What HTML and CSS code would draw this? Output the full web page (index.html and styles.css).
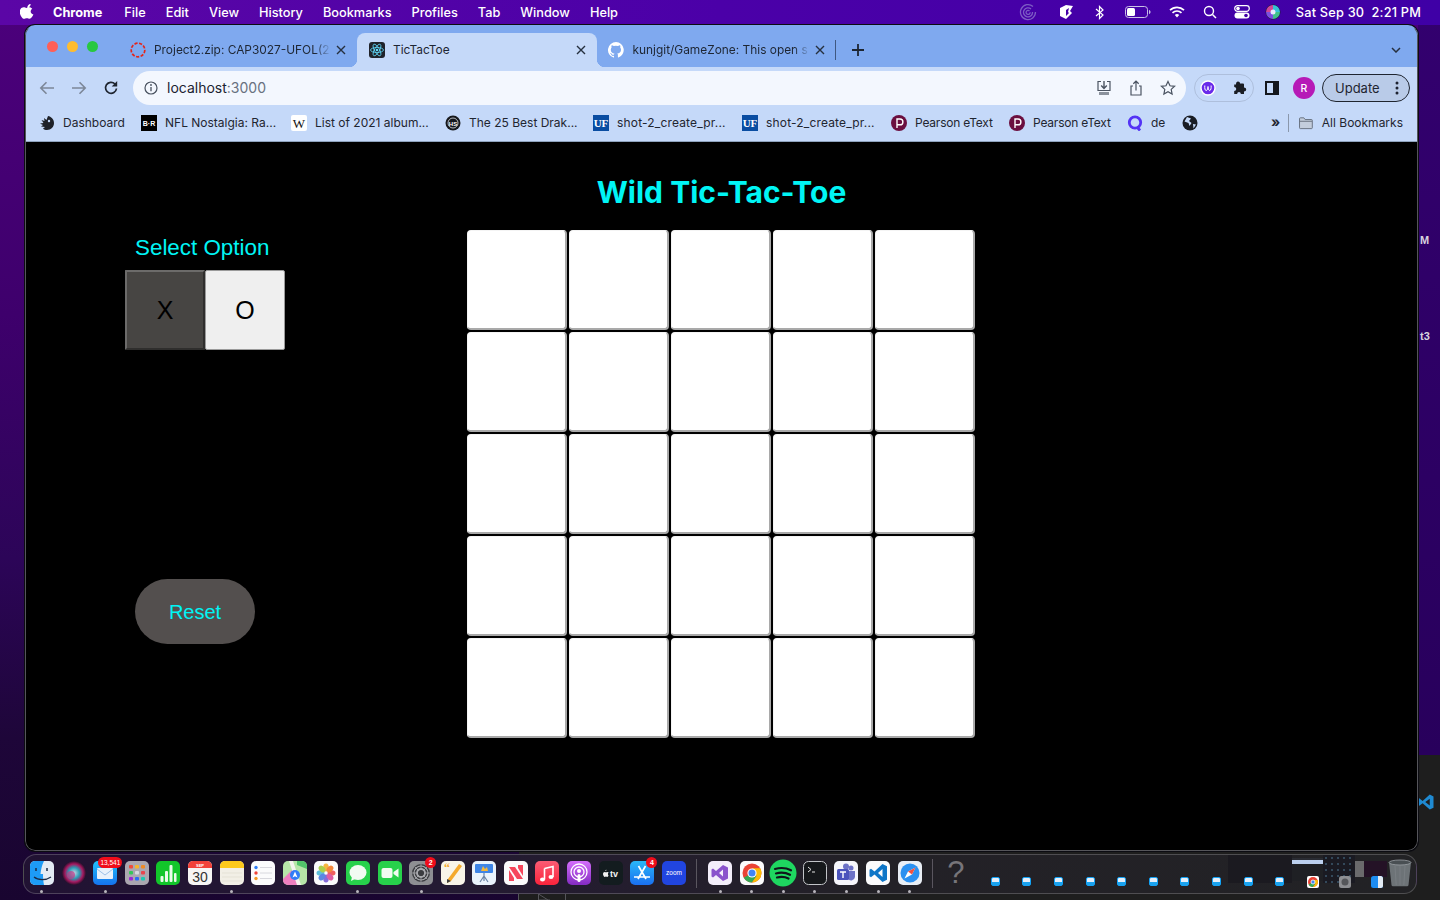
FILE: index.html
```html
<!DOCTYPE html>
<html lang="en">
<head>
<meta charset="utf-8">
<title>TicTacToe</title>
<link rel="stylesheet" href="styles.css">
</head>
<body>
<div class="vscode-behind"><span class="bg-text bg-m">M</span><span class="bg-text bg-t3">t3</span>
  <svg class="vs-peek" width="18" height="18" viewBox="0 0 24 24"><path fill="#1f8ad2" d="M17 2l5 2.500v15L17 22 7.500 13.500 3 17l-2-1.200V8.200L3 7l4.500 3.500zM17 7.500L11 12l6 4.500z"/></svg>
  <svg class="vs-scrap" width="50" height="6" viewBox="0 0 50 6"><path d="M.5 0v6M20.500 0v6L32 6M20.500 0L30 6M47.500 0v6" fill="none" stroke="#55555a"/></svg>
</div>
<header class="menubar">
  <svg class="apple" width="14" height="16" viewBox="0 0 14 16"><path fill="#fff" d="M10.600 1c.1 1-.3 1.900-.9 2.600-.6.700-1.500 1.200-2.400 1.100-.1-1 .4-1.900.9-2.500C8.800 1.500 9.800 1 10.600 1zM13.400 11.500c-.4.900-.6 1.300-1.100 2-.7 1-1.600 2.300-2.800 2.300-1 0-1.300-.7-2.700-.6-1.400 0-1.700.7-2.700.6-1.200 0-2-1.100-2.700-2.100C-.5 11-.7 7.900.400 6.200 1.200 5 2.400 4.300 3.600 4.300s1.900.7 2.900.7c.9 0 1.500-.7 2.900-.7 1 0 2.100.6 2.900 1.500-2.500 1.400-2.100 5 1.100 5.700z"/></svg>
  <nav class="menu-left">
    <span class="menu-strong">Chrome</span><span>File</span><span>Edit</span><span>View</span><span>History</span><span>Bookmarks</span><span>Profiles</span><span>Tab</span><span>Window</span><span>Help</span>
  </nav>
  <div class="menu-right">
    <svg class="st st-spiral" width="18" height="18" viewBox="0 0 18 18"><path fill="none" stroke="#7d5cc4" stroke-width="1.300" d="M14 3.500A7.500 7.500 0 1 0 16.500 9M12 6a4.500 4.500 0 1 0 1.500 3M10.500 8a2 2 0 1 0 .6 1.300"/></svg>
    <svg class="st st-box" width="16" height="16" viewBox="0 0 16 16"><path fill="#fff" d="M8 1l7 1-3 5 2 2-6 6-6-3V4z"/><path fill="#4400a8" d="M8 6l3-2-1 4 1 1-3 3z"/></svg>
    <svg class="st st-bt" width="10" height="15" viewBox="0 0 10 15"><path fill="none" stroke="#fff" stroke-width="1.200" d="M1 4l7 6-3.500 3.500v-12L8 5l-7 6"/></svg>
    <svg class="st st-bat" width="26" height="12" viewBox="0 0 26 12"><rect x=".5" y=".5" width="22" height="11" rx="3" fill="none" stroke="#c9bfe6"/><rect x="2" y="2" width="8" height="8" rx="1.500" fill="#fff"/><path d="M24 4v4c1-.3 1.500-1 1.500-2s-.5-1.700-1.500-2z" fill="#c9bfe6"/></svg>
    <svg class="st st-wifi" width="16" height="12" viewBox="0 0 16 12"><path fill="none" stroke="#fff" stroke-width="1.700" d="M1 4.200a10 10 0 0 1 14 0M3.500 6.800a6.500 6.500 0 0 1 9 0"/><path fill="#fff" d="M5.800 9a3.200 3.200 0 0 1 4.400 0L8 11.500z"/></svg>
    <svg class="st st-search" width="14" height="14" viewBox="0 0 14 14"><circle cx="6" cy="6" r="4.500" fill="none" stroke="#fff" stroke-width="1.400"/><path d="M9.500 9.500L13 13" stroke="#fff" stroke-width="1.500"/></svg>
    <svg class="st st-cc" width="16" height="14" viewBox="0 0 16 14"><rect x=".7" y=".7" width="14.600" height="5.600" rx="2.800" fill="none" stroke="#fff" stroke-width="1.200"/><circle cx="4" cy="3.500" r="1.800" fill="#fff"/><rect x=".5" y="7.500" width="15" height="6" rx="3" fill="#fff"/><circle cx="12" cy="10.500" r="1.800" fill="#4400a8"/></svg>
    <svg class="st st-siri" width="16" height="16" viewBox="0 0 16 16"><circle cx="8" cy="8" r="7.500" fill="#1b1b3a"/><path d="M8 1a7 7 0 0 1 7 7H8z" fill="#35c1d6"/><path d="M1 8a7 7 0 0 1 7-7v7z" fill="#d0449b"/><path d="M8 15a7 7 0 0 1-7-7h7z" fill="#7b4de0"/><path d="M15 8a7 7 0 0 1-7 7V8z" fill="#3fbf8a"/><circle cx="8" cy="8" r="2.500" fill="#e8e8ff"/></svg>
    <span class="clock">Sat Sep 30&nbsp; 2:21 PM</span>
  </div>
</header>

<main class="window">
  <div class="tabstrip">
    <div class="lights"><i class="light red"></i><i class="light yellow"></i><i class="light green"></i></div>
    <div class="tab tab-first">
      <svg class="fav" width="16" height="16" viewBox="0 0 16 16"><circle cx="8" cy="8" r="6.800" fill="none" stroke="#e3261b" stroke-width="1.700" stroke-dasharray="3.200 1.500"/></svg>
      <span class="tab-title">Project2.zip: CAP3027-UFOL(2</span>
      <svg class="tab-x" width="10" height="10" viewBox="0 0 10 10"><path d="M1 1l8 8M9 1l-8 8" stroke="#26303f" stroke-width="1.400"/></svg>
    </div>
    <div class="tab tab-active">
      <svg class="fav" width="16" height="16" viewBox="0 0 16 16"><rect width="16" height="16" rx="3" fill="#20232a"/><g fill="none" stroke="#61dafb" stroke-width=".8"><ellipse cx="8" cy="8" rx="6.500" ry="2.500"/><ellipse cx="8" cy="8" rx="6.500" ry="2.500" transform="rotate(60 8 8)"/><ellipse cx="8" cy="8" rx="6.500" ry="2.500" transform="rotate(120 8 8)"/></g><circle cx="8" cy="8" r="1.300" fill="#61dafb"/></svg>
      <span class="tab-title">TicTacToe</span>
      <svg class="tab-x" width="10" height="10" viewBox="0 0 10 10"><path d="M1 1l8 8M9 1l-8 8" stroke="#26303f" stroke-width="1.400"/></svg>
    </div>
    <div class="tab tab-last">
      <svg class="fav" width="16" height="16" viewBox="0 0 16 16"><path fill="#fff" d="M8 0a8 8 0 0 0-2.500 15.600c.4.100.5-.2.500-.4v-1.400c-2.200.5-2.700-1-2.700-1-.4-.9-.9-1.200-.9-1.200-.7-.5.100-.5.100-.5.800.1 1.200.8 1.200.8.700 1.200 1.900.9 2.300.7.100-.5.300-.9.500-1.100-1.800-.2-3.700-.9-3.700-4 0-.9.300-1.600.8-2.100-.1-.2-.4-1 .1-2.100 0 0 .7-.2 2.200.8a7.600 7.600 0 0 1 4 0c1.500-1 2.200-.8 2.200-.8.400 1.100.2 1.900.1 2.100.5.600.8 1.300.8 2.100 0 3.100-1.900 3.700-3.700 3.900.3.300.6.700.6 1.500v2.200c0 .2.100.5.600.4A8 8 0 0 0 8 0z"/></svg>
      <span class="tab-title">kunjgit/GameZone: This open s</span>
      <svg class="tab-x" width="10" height="10" viewBox="0 0 10 10"><path d="M1 1l8 8M9 1l-8 8" stroke="#26303f" stroke-width="1.400"/></svg>
    </div>
    <i class="tab-sep"></i>
    <svg class="newtab" width="12" height="12" viewBox="0 0 12 12"><path d="M6 0v12M0 6h12" stroke="#1d2532" stroke-width="1.800"/></svg>
    <svg class="tab-menu" width="10" height="6" viewBox="0 0 10 6"><path d="M1 1l4 4 4-4" fill="none" stroke="#26303f" stroke-width="1.500"/></svg>
  </div>

  <div class="toolbar">
    <svg class="nav-ico" width="16" height="14" viewBox="0 0 16 14"><path d="M15 7H2M7.500 1.200L1.800 7l5.700 5.800" fill="none" stroke="#7c8798" stroke-width="1.600"/></svg>
    <svg class="nav-ico" width="16" height="14" viewBox="0 0 16 14"><path d="M1 7h13M8.500 1.200L14.200 7l-5.700 5.800" fill="none" stroke="#7c8798" stroke-width="1.600"/></svg>
    <svg class="nav-ico" width="16" height="16" viewBox="0 0 16 16"><path d="M13.500 8.500A5.500 5.500 0 1 1 12 4" fill="none" stroke="#1f2530" stroke-width="1.700"/><path d="M14.200 1v5.500H8.700z" fill="#1f2530"/></svg>
    <div class="omnibox">
      <svg width="14" height="14" viewBox="0 0 14 14"><circle cx="7" cy="7" r="6" fill="none" stroke="#47505e" stroke-width="1.200"/><path d="M7 6v4.200" stroke="#47505e" stroke-width="1.300"/><circle cx="7" cy="4" r=".9" fill="#47505e"/></svg>
      <span class="url">localhost<span class="url-port">:3000</span></span>
      <div class="omni-actions">
        <svg width="16" height="16" viewBox="0 0 16 16"><path d="M5 1.500H2v9h12v-9h-3" fill="none" stroke="#4a5361" stroke-width="1.200"/><path d="M8 1v7M5.200 5.500L8 8.400l2.800-2.900" fill="none" stroke="#4a5361" stroke-width="1.400"/><rect x="3" y="12" width="10" height="3" fill="#8b929d"/></svg>
        <svg width="14" height="16" viewBox="0 0 14 16"><path d="M4 6H2v9h10V6h-2" fill="none" stroke="#4a5361" stroke-width="1.200"/><path d="M7 10.500V1.500M4.300 3.800L7 1.200l2.700 2.600" fill="none" stroke="#4a5361" stroke-width="1.200"/></svg>
        <svg width="16" height="16" viewBox="0 0 16 16"><path d="M8 1.500l2 4.300 4.600.5-3.400 3.100.9 4.600L8 11.700l-4.100 2.300.9-4.600L1.400 6.300 6 5.800z" fill="none" stroke="#4a5361" stroke-width="1.200"/></svg>
      </div>
    </div>
    <div class="ext-pill">
      <svg width="16" height="16" viewBox="0 0 16 16"><circle cx="8" cy="8" r="7" fill="#6a2bea" stroke="#fff" stroke-width="1.400"/><path d="M4.800 5.500c-.3 3 .2 5 1.400 5s1.800-2 1.800-4c0 2 .6 4 1.700 4s1.700-2.500 1.400-5" fill="none" stroke="#fff" stroke-width="1"/></svg>
      <svg width="16" height="16" viewBox="0 0 16 16"><path fill="#1a1d24" d="M6 1.500c1.300 0 2 .8 2 2H11a1 1 0 0 1 1 1v3c1.300 0 2.200.8 2.200 2s-.9 2-2.200 2v2.500H8.800c0-1.300-.8-2-1.800-2s-1.800.7-1.800 2H2.200v-3c1.200 0 2-.8 2-2s-.8-2-2-2V4.500H4c0-1.800.7-3 2-3z"/></svg>
    </div>
    <svg class="side-ico" width="14" height="14" viewBox="0 0 14 14"><rect x="1" y="1" width="12" height="12" fill="none" stroke="#14171d" stroke-width="2"/><rect x="8" y="1" width="5" height="12" fill="#14171d"/></svg>
    <div class="avatar">R</div>
    <div class="update"><span>Update</span>
      <svg width="4" height="14" viewBox="0 0 4 14"><circle cx="2" cy="2" r="1.500" fill="#1d2230"/><circle cx="2" cy="7" r="1.500" fill="#1d2230"/><circle cx="2" cy="12" r="1.500" fill="#1d2230"/></svg>
    </div>
  </div>

  <div class="bookmarks">
    <a class="bm"><svg width="16" height="16" viewBox="0 0 16 16"><path fill="#1e2128" d="M9 1c3 .5 6 3 6 7 0 4-3 7-7 7-1.500 0-3-.5-4-1.500L6 12l-4-.5L4 10 1 8.500 4.500 8 2.500 5l3 1L5 3l2.500 2z"/><circle cx="10" cy="6" r="1.200" fill="#c5d9f9"/></svg><span>Dashboard</span></a>
    <a class="bm bm-nfl"><svg width="16" height="16" viewBox="0 0 16 16"><rect width="16" height="16" fill="#000"/><text x="8" y="11" class="svg-nfl">B·R</text></svg><span>NFL Nostalgia: Ra...</span></a>
    <a class="bm bm-w"><svg width="16" height="16" viewBox="0 0 16 16"><rect width="16" height="16" rx="2" fill="#fff"/><text x="8" y="13" class="svg-w">W</text></svg><span>List of 2021 album...</span></a>
    <a class="bm bm-hs"><svg width="16" height="16" viewBox="0 0 16 16"><circle cx="8" cy="8" r="7.500" fill="#16181c"/><circle cx="8" cy="8" r="5" fill="none" stroke="#dfe3ea" stroke-width=".8"/><text x="8" y="10.500" class="svg-hs">HS</text></svg><span>The 25 Best Drak...</span></a>
    <a class="bm bm-uf"><svg width="16" height="16" viewBox="0 0 16 16"><rect width="16" height="16" fill="#0a4da2"/><text x="8" y="12" class="svg-uf">UF</text></svg><span class="wide">shot-2_create_pr...</span></a>
    <a class="bm bm-uf2"><svg width="16" height="16" viewBox="0 0 16 16"><rect width="16" height="16" fill="#0a4da2"/><text x="8" y="12" class="svg-uf">UF</text></svg><span class="wide">shot-2_create_pr...</span></a>
    <a class="bm bm-p"><svg width="16" height="16" viewBox="0 0 16 16"><circle cx="8" cy="8" r="8" fill="#6b0f3f"/><path d="M6 13V4h3a2.800 2.800 0 0 1 0 5.800H6" fill="none" stroke="#fff" stroke-width="1.400"/></svg><span class="narrow">Pearson eText</span></a>
    <a class="bm bm-p2"><svg width="16" height="16" viewBox="0 0 16 16"><circle cx="8" cy="8" r="8" fill="#6b0f3f"/><path d="M6 13V4h3a2.800 2.800 0 0 1 0 5.800H6" fill="none" stroke="#fff" stroke-width="1.400"/></svg><span class="narrow">Pearson eText</span></a>
    <a class="bm bm-q"><svg width="16" height="16" viewBox="0 0 16 16"><circle cx="8" cy="7.500" r="5.700" fill="none" stroke="#5433f5" stroke-width="2.800"/><path d="M10 12l3 3.500" stroke="#5433f5" stroke-width="2.800"/></svg><span>de</span></a>
    <a class="bm bm-globe"><svg width="16" height="16" viewBox="0 0 16 16"><circle cx="8" cy="8" r="7.500" fill="#1a1d24"/><path d="M5 2l4 1.500L7 6l2.500 2-2 3-1-3L2.500 6.500zM11 9l3 .5-2.500 4z" fill="#c5d9f9"/></svg></a>
    <span class="bm-more">»</span>
    <i class="bm-sep"></i>
    <a class="bm bm-all"><svg width="16" height="14" viewBox="0 0 16 14"><path d="M.6 12.500V2a1 1 0 0 1 1-1h4l1.500 2h7.300a1 1 0 0 1 1 1v8.500a1 1 0 0 1-1 1H1.600a1 1 0 0 1-1-1z" fill="#c3cddc" stroke="#5d6674"/><path d="M1 5h14" stroke="#5d6674"/></svg><span>All Bookmarks</span></a>
  </div>

  <section class="page">
    <h1 class="title">Wild Tic-Tac-Toe</h1>
    <div class="game">
      <aside class="panel">
        <h2 class="select-label">Select Option</h2>
        <div class="choice">
          <button class="opt opt-x">X</button>
          <button class="opt opt-o">O</button>
        </div>
        <button class="reset">Reset</button>
      </aside>
      <div class="board">
        <button class="cell"></button><button class="cell"></button><button class="cell"></button><button class="cell"></button><button class="cell"></button>
        <button class="cell"></button><button class="cell"></button><button class="cell"></button><button class="cell"></button><button class="cell"></button>
        <button class="cell"></button><button class="cell"></button><button class="cell"></button><button class="cell"></button><button class="cell"></button>
        <button class="cell"></button><button class="cell"></button><button class="cell"></button><button class="cell"></button><button class="cell"></button>
        <button class="cell"></button><button class="cell"></button><button class="cell"></button><button class="cell"></button><button class="cell"></button>
      </div>
    </div>
  </section>
</main>

<footer class="dock">
  <div class="di run"><svg width="24" height="24" viewBox="0 0 24 24"><rect width="24" height="24" rx="5" fill="#e3ebf4"/><path d="M0 5a5 5 0 0 1 5-5h9c-2 4-3 8-3.500 13H13c0 4 .3 7 1 11H5a5 5 0 0 1-5-5z" fill="#1d9bf6"/><path d="M6 7v3M17 7v3" stroke="#1a2a44" stroke-width="1.500"/><path d="M4 16c4 3.500 12 3.500 17 0" fill="none" stroke="#1a2a44" stroke-width="1.200"/></svg></div>
  <div class="di"><svg width="24" height="24" viewBox="0 0 24 24"><defs><radialGradient id="gSiri"><stop offset="0" stop-color="#c9d6e8"/><stop offset=".45" stop-color="#2b9db5"/><stop offset=".75" stop-color="#a6185f"/><stop offset="1" stop-color="#2a0f2d"/></radialGradient></defs><circle cx="12" cy="12" r="12" fill="url(#gSiri)"/><circle cx="9" cy="14" r="4" fill="#c23a86" opacity=".7"/></svg></div>
  <div class="di run"><svg width="24" height="24" viewBox="0 0 24 24"><defs><linearGradient id="gMail" x1="0" y1="0" x2="0" y2="1"><stop offset="0" stop-color="#1fc1fb"/><stop offset="1" stop-color="#1573ee"/></linearGradient></defs><rect width="24" height="24" rx="5" fill="url(#gMail)"/><rect x="4" y="7" width="16" height="11" rx="1" fill="#e8f1fb"/><path d="M4 8l8 6 8-6" fill="none" stroke="#9cc0e8"/></svg><b class="badge badge-wide">13,541</b></div>
  <div class="di"><svg width="24" height="24" viewBox="0 0 24 24"><rect width="24" height="24" rx="5" fill="#aba7b0"/><g><rect x="4" y="4" width="4" height="3.500" rx="1" fill="#ef4b3d"/><rect x="10" y="4" width="4" height="3.500" rx="1" fill="#f6b52c"/><rect x="16" y="4" width="4" height="3.500" rx="1" fill="#f08a25"/><rect x="4" y="10" width="4" height="3.500" rx="1" fill="#34c759"/><rect x="10" y="10" width="4" height="3.500" rx="1" fill="#d5d8de"/><rect x="16" y="10" width="4" height="3.500" rx="1" fill="#e9444d"/><rect x="4" y="16" width="4" height="3.500" rx="1" fill="#9b28d6"/><rect x="10" y="16" width="4" height="3.500" rx="1" fill="#2f6cf0"/><rect x="16" y="16" width="4" height="3.500" rx="1" fill="#1dc8b2"/></g></svg></div>
  <div class="di"><svg width="24" height="24" viewBox="0 0 24 24"><rect width="24" height="24" rx="5" fill="#12c62a"/><g fill="#e9fbe9"><rect x="4.500" y="15" width="3" height="6" rx="1"/><rect x="9" y="10" width="3" height="11" rx="1"/><rect x="13.500" y="4" width="3" height="17" rx="1"/><rect x="18" y="12" width="2.500" height="9" rx="1"/></g></svg></div>
  <div class="di"><svg width="24" height="24" viewBox="0 0 24 24"><rect width="24" height="24" rx="5" fill="#f7f6f5"/><path d="M0 7V5a5 5 0 0 1 5-5h14a5 5 0 0 1 5 5v2z" fill="#f2423a"/><text x="12" y="5.500" class="svg-sep">SEP</text><text x="12" y="21" class="svg-cal">30</text></svg></div>
  <div class="di run"><svg width="24" height="24" viewBox="0 0 24 24"><rect width="24" height="24" rx="5" fill="#f2efe6"/><path d="M0 7V5a5 5 0 0 1 5-5h14a5 5 0 0 1 5 5v2z" fill="#fdc91c"/><path d="M2 12h20M2 16h20M2 20h20" stroke="#dcd8cd" stroke-width=".6"/></svg></div>
  <div class="di"><svg width="24" height="24" viewBox="0 0 24 24"><rect width="24" height="24" rx="5" fill="#fbfbfc"/><circle cx="5" cy="6.500" r="1.700" fill="#2f7cf6"/><circle cx="5" cy="12" r="1.700" fill="#f04438"/><circle cx="5" cy="17.500" r="1.700" fill="#f59a23"/><path d="M9 6.500h12M9 12h12M9 17.500h12" stroke="#d8d8de"/></svg></div>
  <div class="di"><svg width="24" height="24" viewBox="0 0 24 24"><rect width="24" height="24" rx="5" fill="#b7e6a8"/><path d="M0 18L9 9l6 15H5a5 5 0 0 1-5-5z" fill="#ee7fbf"/><path d="M14 0h5a5 5 0 0 1 5 5v3L14 4z" fill="#52c46a"/><path d="M10 0l8 24h-4L6 0z" fill="#f5f3ee"/><circle cx="12" cy="14" r="5" fill="#2f7cf6"/><path d="M12 10.500l2.500 6-2.500-1.200-2.500 1.200z" fill="#fff"/></svg></div>
  <div class="di"><svg width="24" height="24" viewBox="0 0 24 24"><rect width="24" height="24" rx="5" fill="#fbfbfc"/><g opacity=".9"><ellipse cx="12" cy="6.500" rx="2.800" ry="4" fill="#f6b02c"/><ellipse cx="12" cy="17.500" rx="2.800" ry="4" fill="#7a5cd6"/><ellipse cx="6.500" cy="12" rx="4" ry="2.800" fill="#4fb9d8"/><ellipse cx="17.500" cy="12" rx="4" ry="2.800" fill="#ef4f4f"/><ellipse cx="8" cy="8" rx="3.800" ry="2.800" transform="rotate(45 8 8)" fill="#a2cc3a"/><ellipse cx="16" cy="8" rx="3.800" ry="2.800" transform="rotate(-45 16 8)" fill="#f37b2a"/><ellipse cx="8" cy="16" rx="3.800" ry="2.800" transform="rotate(-45 8 16)" fill="#4a7be0"/><ellipse cx="16" cy="16" rx="3.800" ry="2.800" transform="rotate(45 16 16)" fill="#db4d9a"/></g></svg></div>
  <div class="di run"><svg width="24" height="24" viewBox="0 0 24 24"><rect width="24" height="24" rx="5" fill="#27d14b"/><ellipse cx="12" cy="11.500" rx="8.500" ry="7.500" fill="#f2fbf2"/><path d="M6 16l-1 4 4-2z" fill="#f2fbf2"/></svg></div>
  <div class="di"><svg width="24" height="24" viewBox="0 0 24 24"><rect width="24" height="24" rx="5" fill="#27d14b"/><rect x="3.500" y="7" width="11" height="10" rx="2" fill="#f2fbf2"/><path d="M15.500 11l5-3.500v9l-5-3.500z" fill="#f2fbf2"/></svg></div>
  <div class="di run"><svg width="24" height="24" viewBox="0 0 24 24"><rect width="24" height="24" rx="5" fill="#8e8f93"/><circle cx="12" cy="12" r="9" fill="#3b3c40"/><circle cx="12" cy="12" r="7" fill="none" stroke="#a9aaae" stroke-width="1.200"/><circle cx="12" cy="12" r="4" fill="none" stroke="#a9aaae" stroke-width="1.800"/><path d="M12 3v6M12 15v6M3 12h6M15 12h6M6 6l4 4M14 14l4 4M18 6l-4 4M10 14l-4 4" stroke="#a9aaae" stroke-width=".8"/></svg><b class="badge">2</b></div>
  <div class="di"><svg width="24" height="24" viewBox="0 0 24 24"><rect width="24" height="24" rx="5" fill="#f8f4e8"/><text x="6" y="11" class="svg-quote">“</text><path d="M18 3l3 2-11 15-4 2 1-4z" fill="#f4a92c"/><path d="M6 18l4 2-4 2z" fill="#3c3c3c"/></svg></div>
  <div class="di"><svg width="24" height="24" viewBox="0 0 24 24"><rect width="24" height="24" rx="5" fill="#eaf3fc"/><rect x="3" y="3" width="18" height="9" rx="1" fill="#3f85e6"/><path d="M9 10l2-5 2 3 2-2 1 4z" fill="#f4b73a"/><path d="M12 12v8M8 21l4-6 4 6" stroke="#6b84a5" stroke-width="1.200" fill="none"/></svg></div>
  <div class="di"><svg width="24" height="24" viewBox="0 0 24 24"><rect width="24" height="24" rx="5" fill="#fbfbfc"/><path d="M5 6l6 0 8 12-6 0z" fill="#f6465c"/><path d="M5 9l5 8v3H5zM19 15l-5-8V4h5z" fill="#f6465c"/></svg></div>
  <div class="di"><svg width="24" height="24" viewBox="0 0 24 24"><defs><linearGradient id="gMusic" x1="0" y1="0" x2="0" y2="1"><stop offset="0" stop-color="#fb5c74"/><stop offset="1" stop-color="#fa233b"/></linearGradient></defs><rect width="24" height="24" rx="5" fill="url(#gMusic)"/><path d="M9.500 7.500L18 5.500V16M9.500 7.500V18.500" fill="none" stroke="#fff" stroke-width="1.600"/><ellipse cx="7.500" cy="18.500" rx="2.500" ry="2" fill="#fff"/><ellipse cx="16" cy="16" rx="2.500" ry="2" fill="#fff"/></svg></div>
  <div class="di"><svg width="24" height="24" viewBox="0 0 24 24"><defs><linearGradient id="gPod" x1="0" y1="0" x2="0" y2="1"><stop offset="0" stop-color="#d56efc"/><stop offset="1" stop-color="#832bc1"/></linearGradient></defs><rect width="24" height="24" rx="5" fill="url(#gPod)"/><circle cx="12" cy="11" r="8" fill="none" stroke="#fff" stroke-width="1.300"/><circle cx="12" cy="11" r="5" fill="none" stroke="#fff" stroke-width="1.300"/><circle cx="12" cy="10" r="2" fill="#fff"/><rect x="10.500" y="13" width="3" height="8" rx="1.500" fill="#fff"/></svg></div>
  <div class="di"><svg width="24" height="24" viewBox="0 0 24 24"><rect width="24" height="24" rx="5" fill="#131c1f"/><text x="11" y="15.500" class="svg-tv">tv</text><path fill="#f2f2f2" d="M7.400 8.800c.1.600-.4 1.300-1 1.300-.1-.6.400-1.300 1-1.300zM9.500 14.500c-.3.700-.7 1.400-1.300 1.400-.5 0-.6-.3-1.200-.3s-.8.300-1.200.3c-.7 0-1.800-1.500-1.800-3 0-1.300.8-2 1.700-2 .5 0 1 .3 1.300.3s.8-.3 1.400-.3c.5 0 1 .3 1.300.7-1.100.7-.9 2.300-.2 2.900z"/></svg></div>
  <div class="di"><svg width="24" height="24" viewBox="0 0 24 24"><defs><linearGradient id="gApp" x1="0" y1="0" x2="0" y2="1"><stop offset="0" stop-color="#2ab7f7"/><stop offset="1" stop-color="#1a6ff0"/></linearGradient></defs><rect width="24" height="24" rx="5" fill="url(#gApp)"/><path d="M8.500 5l7.500 13M15.500 5L8 18M4 16h16" stroke="#fff" stroke-width="1.700" fill="none"/></svg><b class="badge">4</b></div>
  <div class="di"><svg width="24" height="24" viewBox="0 0 24 24"><rect width="24" height="24" rx="5" fill="#2145e0"/><text x="12" y="14" class="svg-zoom">zoom</text></svg></div>
  <i class="dock-sep"></i>
  <div class="di run"><svg width="24" height="24" viewBox="0 0 24 24"><rect width="24" height="24" rx="5" fill="#f3eefa"/><path d="M15 4l5 2.500v11L15 20l-7-6-3 2.500-1.500-1V8.500L5 7.500 8 10zM15 8.500L11 12l4 3.500z" fill="#8a53cc"/></svg></div>
  <div class="di run"><svg width="24" height="24" viewBox="0 0 24 24"><rect width="24" height="24" rx="5" fill="#fbfbfc"/><circle cx="12" cy="12" r="9.500" fill="#ea4335"/><path d="M12 12L3.800 16.800A9.500 9.500 0 0 0 12 21.500l4.500-6.500z" fill="#34a853"/><path d="M12 12l4.500 3-4.500 6.500A9.500 9.500 0 0 0 21.500 12 9.500 9.500 0 0 0 20.200 7.200H12z" fill="#fbbc05"/><circle cx="12" cy="12" r="4.600" fill="#fff"/><circle cx="12" cy="12" r="3.500" fill="#4285f4"/></svg></div>
  <div class="di run"><svg class="big" width="28" height="28" viewBox="0 0 28 28"><circle cx="14" cy="14" r="13.500" fill="#1ed760"/><path d="M6 10c6-1.700 11-1.300 16 1.300M7 14.500c5-1.400 9.500-1 14 1.300M8 18.500c4-1 8-.8 11.500 1" fill="none" stroke="#10151a" stroke-width="2.200" stroke-linecap="round"/></svg></div>
  <div class="di run"><svg width="24" height="24" viewBox="0 0 24 24"><rect x=".5" y=".5" width="23" height="23" rx="5" fill="#16181b" stroke="#c2c4c8"/><path d="M5 6l3 2.500L5 11M9 11h3" fill="none" stroke="#e4e4e4"/></svg></div>
  <div class="di run"><svg width="24" height="24" viewBox="0 0 24 24"><rect width="24" height="24" rx="5" fill="#f6f6fb"/><circle cx="17" cy="7" r="2.500" fill="#6d72c6"/><circle cx="12" cy="5.500" r="3" fill="#6d72c6"/><path d="M14 10h7v6a4 4 0 0 1-7 2z" fill="#6d72c6"/><rect x="3" y="8" width="12" height="11" rx="1.500" fill="#4b53bc"/><path d="M6 11h6M9 11v6" stroke="#fff" stroke-width="1.400"/></svg></div>
  <div class="di run"><svg width="24" height="24" viewBox="0 0 24 24"><rect width="24" height="24" rx="5" fill="#fbfbfc"/><path d="M16.500 3l4.500 2.300v13.400L16.500 21l-8-7.500-3.500 2.700-1.500-1V8.800L5 7.800l3.500 2.700zM16.500 8L12 12l4.500 4z" fill="#0e76c8"/></svg></div>
  <div class="di run"><svg width="24" height="24" viewBox="0 0 24 24"><rect width="24" height="24" rx="5" fill="#e9eef5"/><circle cx="12" cy="12" r="9.500" fill="#2b90f0"/><path d="M17.500 6.500L10 10.500 6.500 17.500 14 13.500z" fill="#fff"/><path d="M17.500 6.500L10 10.500l4 3z" fill="#f4513f"/></svg></div>
  <i class="dock-sep dock-sep-2"></i>
  <div class="di"><span class="doc-q">?</span></div>
  <div class="di di-first-mini"><i class="mini"></i></div>
  <div class="di"><i class="mini"></i></div>
  <div class="di"><i class="mini"></i></div>
  <div class="di"><i class="mini"></i></div>
  <div class="di"><i class="mini"></i></div>
  <div class="di"><i class="mini"></i></div>
  <div class="di"><i class="mini"></i></div>
  <div class="di"><i class="mini"></i></div>
  <div class="di"><div class="thumb"></div><i class="mini"></i></div>
  <div class="di"><div class="thumb"></div><i class="mini"></i></div>
  <div class="di"><div class="thumb thumb-light"></div><svg class="mini-svg" width="12" height="12" viewBox="0 0 24 24"><rect width="24" height="24" rx="4" fill="#fff"/><circle cx="12" cy="12" r="10" fill="#ea4335"/><path d="M12 12L3 17a10 10 0 0 0 9 5l5-7z" fill="#34a853"/><path d="M12 12l5 3-5 7a10 10 0 0 0 9-14H12z" fill="#fbbc05"/><circle cx="12" cy="12" r="4" fill="#4285f4" stroke="#fff" stroke-width="1.500"/></svg></div>
  <div class="di"><div class="thumb thumb-grid"></div><svg class="mini-svg" width="12" height="12" viewBox="0 0 24 24"><rect width="24" height="24" rx="5" fill="#8e8f93"/><circle cx="12" cy="12" r="7" fill="#55565a"/></svg></div>
  <div class="di"><div class="thumb thumb-photo"></div><svg class="mini-svg" width="12" height="12" viewBox="0 0 24 24"><rect width="24" height="24" rx="5" fill="#1d8cf2"/><path d="M14 0h5a5 5 0 0 1 5 5v14a5 5 0 0 1-5 5h-5z" fill="#e3ebf4"/></svg></div>
  <svg class="trash" width="24" height="28" viewBox="0 0 24 28"><path d="M1 3h22l-2.500 23a1.500 1.500 0 0 1-1.500 1.300H5A1.500 1.500 0 0 1 3.500 26z" fill="#6d7377"/><ellipse cx="12" cy="3.500" rx="11" ry="2.500" fill="#494f53" stroke="#9aa0a4" stroke-width=".8"/><path d="M7 7l1.200 19M12 7v19M17 7l-1.200 19" stroke="#7f8589" stroke-width=".6"/></svg>
</footer>
</body>
</html>
```
FILE: styles.css
```css
* { box-sizing: border-box; }
html, body { margin: 0; padding: 0; }
body {
  position: relative;
  width: 1440px;
  height: 900px;
  overflow: hidden;
  font-family: Inter, "Liberation Sans", sans-serif;
  background: linear-gradient(180deg, #4c007c 0%, #3e006c 35%, #2c0558 62%, #1e0639 82%, #190530 100%);
}
.vscode-behind {
  position: absolute;
  inset: 0;
  background:
    linear-gradient(#1e1e1e, #1e1e1e) 519px 755px / 921px 145px no-repeat,
    linear-gradient(180deg, #33006f, #28005c) 1418px 0 / 22px 755px no-repeat;
}
.bg-text { position: absolute; left: 1420px; color: #d8d4df; font: 700 11px "Liberation Sans", sans-serif; }
.bg-m { top: 234px; }
.bg-t3 { top: 330px; }
.vs-peek { position: absolute; left: 1417px; top: 793px; }
.vs-scrap { position: absolute; left: 518px; top: 894px; }

.menubar {
  position: relative;
  display: flex;
  align-items: center;
  height: 25px;
  padding: 0 19px 1px 20px;
  color: #fff;
  font-size: 12.750px;
  font-weight: 500;
  background: linear-gradient(90deg, #5b06a6 0%, #4b00a8 50%, #3f00a6 100%);
}
.apple { flex: none; margin-top: -2px; }
.menu-left { display: flex; gap: 20px; margin-left: 19px; }
.menu-strong { font-weight: 700; margin-right: 2px; }
.menu-right { display: flex; align-items: center; margin-left: auto; }
.st { flex: none; }
.st-spiral { margin-right: 21px; }
.st-box { margin-right: 21px; }
.st-bt { margin-right: 20px; }
.st-bat { margin-right: 18px; }
.st-wifi { margin-right: 18px; }
.st-search { margin-right: 17px; }
.st-cc { margin-right: 15px; }
.st-siri { margin-right: 15px; }
.clock { white-space: nowrap; letter-spacing: .2px; }

.window {
  position: absolute;
  left: 25px;
  top: 25px;
  width: 1393px;
  height: 826px;
  display: flex;
  flex-direction: column;
  overflow: hidden;
  border-radius: 10px;
  background: #000;
  box-shadow: 0 0 0 1px #0c0c12;
}
.window::after {
  content: "";
  position: absolute;
  inset: 0;
  border: 1px solid #55555a;
  border-top-color: transparent;
  border-radius: 10px;
  pointer-events: none;
}
.tabstrip {
  display: flex;
  align-items: flex-end;
  flex: none;
  height: 42px;
  background: #7fa9ef;
}
.lights { display: flex; gap: 9px; flex: none; width: 93px; padding: 0 0 15px 22px; align-self: flex-end; }
.light { width: 11px; height: 11px; border-radius: 50%; }
.red { background: #ff5f57; }
.yellow { background: #febc2e; }
.green { background: #28c840; }
.tab {
  position: relative;
  display: flex;
  align-items: center;
  width: 239.500px;
  height: 34px;
  padding: 0 11px 0 12px;
  color: #1e2633;
  font-size: 11.900px;
  border-radius: 8px 8px 0 0;
}
.tab-first { width: 239px; }
.tab-last { padding-left: 11px; }
.tab-active { background: #c5d9f9; }
.tab-active::before, .tab-active::after {
  content: "";
  position: absolute;
  bottom: 0;
  width: 8px;
  height: 8px;
}
.tab-active::before { left: -8px; background: radial-gradient(circle at 0 0, transparent 8px, #c5d9f9 8.500px); }
.tab-active::after { right: -8px; background: radial-gradient(circle at 100% 0, transparent 8px, #c5d9f9 8.500px); }
.fav { flex: none; }
.tab-title {
  flex: 1;
  min-width: 0;
  margin: 0 5px 2px 8px;
  white-space: nowrap;
  overflow: visible;
  -webkit-mask-image: linear-gradient(90deg, #000 calc(100% - 16px), transparent);
  mask-image: linear-gradient(90deg, #000 calc(100% - 16px), transparent);
}
.tab-active .tab-title { -webkit-mask-image: none; mask-image: none; }
.tab-last .tab-title { margin-left: 9px; }
.tab-x { flex: none; }
.tab-sep { flex: none; width: 1px; height: 20px; margin: 0 0 7px -1px; background: #3f5780; }
.newtab { flex: none; margin: 0 0 11px 16px; }
.tab-menu { flex: none; margin: 0 17px 14px auto; }

.toolbar {
  display: flex;
  align-items: center;
  flex: none;
  height: 38px;
  padding: 4px 8px 0 14px;
  background: #c5d9f9;
}
.nav-ico { flex: none; width: 16px; margin-right: 16px; }
.omnibox {
  display: flex;
  align-items: center;
  flex: none;
  width: 1053px;
  height: 34px;
  margin-left: -2px;
  padding: 0 10px 0 11px;
  border-radius: 17px;
  background: #f3f7fe;
}
.url { margin: 0 0 2px 9px; color: #1c2330; font-size: 14px; }
.url-port { color: #687180; }
.omni-actions { display: flex; align-items: center; gap: 17px; margin-left: auto; }
.ext-pill {
  display: flex;
  align-items: center;
  gap: 16px;
  flex: none;
  width: 60px;
  height: 28px;
  margin-left: 8px;
  padding-left: 5px;
  border: 1px solid #aebfdc;
  border-radius: 14px;
}
.side-ico { flex: none; margin-left: 11px; }
.avatar {
  display: flex;
  align-items: center;
  justify-content: center;
  flex: none;
  width: 22px;
  height: 22px;
  margin-left: 14px;
  border-radius: 50%;
  color: #fff;
  font-size: 10.500px;
  font-weight: 500;
  background: #b61ab7;
}
.update {
  display: flex;
  align-items: center;
  justify-content: space-between;
  flex: none;
  width: 88px;
  height: 28px;
  margin-left: 7px;
  padding: 0 10px 0 12px;
  border: 1px solid #1f2530;
  border-radius: 14px;
  color: #1f2530;
  font-size: 13px;
  background: #b9cbe8;
}

.bookmarks {
  display: flex;
  align-items: center;
  flex: none;
  height: 37px;
  padding: 0 0 0 14px;
  color: #1f2530;
  font-size: 12px;
  background: #c5d9f9;
  border-bottom: 1px solid #8fa3bd;
}
.bm { display: flex; align-items: center; gap: 8px; flex: none; width: 102px; white-space: nowrap; }
.bm span { margin-bottom: 2px; }
.bm .wide { letter-spacing: .17px; }
.bm .narrow { letter-spacing: -.2px; }
.bm-nfl { width: 150px; }
.bm-w { width: 154px; }
.bm-hs { width: 148px; }
.bm-uf { width: 149px; }
.bm-uf2 { width: 149px; }
.bm-p { width: 118px; }
.bm-p2 { width: 118px; }
.bm-q { width: 55px; }
.bm-globe { width: 89px; }
.bm-more { flex: none; width: 16px; font-size: 14px; font-weight: 700; line-height: 14px; margin-top: -2px; }
.bm-sep { flex: none; width: 1px; height: 18px; margin: 0 10px 0 1px; background: #8a97ab; }
.bm-all { width: 104px; gap: 9px; }
.svg-nfl { fill: #fff; font: 700 7px "Liberation Sans", sans-serif; text-anchor: middle; }
.svg-w { fill: #111; font: 13px "Liberation Serif", serif; text-anchor: middle; }
.svg-hs { fill: #fff; font: 700 6px "Liberation Sans", sans-serif; text-anchor: middle; }
.svg-uf { fill: #fff; font: 700 11px "Liberation Serif", serif; text-anchor: middle; }

.page { flex: 1; display: flex; flex-direction: column; min-height: 0; background: #000; }
.title {
  height: 40px;
  margin: 30px 0 18px;
  color: #00f5f5;
  font-size: 30px;
  font-weight: 700;
  line-height: 40px;
  text-align: center;
}
.game { display: flex; padding-left: 100px; }
.panel { display: flex; flex-direction: column; align-items: flex-start; flex: none; width: 342px; }
.select-label {
  height: 35px;
  margin: 0 0 5px 10px;
  padding-top: 1px;
  color: #00f5f5;
  font: 400 22.400px/34px "Liberation Sans", sans-serif;
}
.choice { display: flex; }
.opt {
  width: 80px;
  height: 80px;
  padding: 0;
  border-style: solid;
  color: #000;
  font: 400 25px "Liberation Sans", sans-serif;
}
.opt-x { border-width: 2px; border-radius: 1px; background: #474543; border-color: #6c6b6a #2f2e2d #2f2e2d #6c6b6a; }
.opt-o { border-width: 1px; border-radius: 2px; background: #efefef; border-color: #9a9a9a; }
.reset {
  width: 120px;
  height: 65px;
  margin: 229px 0 0 10px;
  padding: 2px 0 0;
  border: 0;
  border-radius: 33px;
  color: #00f5f5;
  font: 400 20px "Liberation Sans", sans-serif;
  background: #534f4e;
}
.board { display: grid; grid-template-columns: repeat(5, 100px); grid-auto-rows: 100px; gap: 2px; }
.cell {
  padding: 0;
  border-style: solid;
  border-width: 1px 2px 2px 1px;
  border-color: #f4f4f4 #a9a9a9 #a9a9a9 #f4f4f4;
  border-radius: 4px;
  background: #fff;
}

.dock {
  position: absolute;
  left: 23px;
  top: 854px;
  width: 1394px;
  height: 40px;
  display: flex;
  align-items: flex-start;
  padding: 6px 0 0 2.200px;
  border: 1px solid rgba(255,255,255,.2);
  border-radius: 13px;
  background: linear-gradient(90deg, #211233 0%, #241a33 30%, #232127 60%, #222225 100%);
}
.di {
  position: relative;
  display: flex;
  justify-content: center;
  flex: none;
  width: 31.600px;
  height: 24px;
}
.di .big { margin-top: -2px; }
.run::after {
  content: "";
  position: absolute;
  left: 50%;
  top: 29px;
  width: 3px;
  height: 3px;
  margin-left: -1.500px;
  border-radius: 50%;
  background: #b9b6bd;
}
.badge {
  position: absolute;
  left: 20px;
  top: -4px;
  min-width: 11px;
  height: 11px;
  border-radius: 6px;
  color: #fff;
  font: 700 7px/11px "Liberation Sans", sans-serif;
  text-align: center;
  background: #f00d1b;
}
.badge-wide { left: 9px; padding: 0 2px; font-size: 6.500px; font-weight: 400; }
.svg-sep { fill: #fff; font: 700 4px "Liberation Sans", sans-serif; text-anchor: middle; }
.svg-cal { fill: #333; font: 400 14px "Liberation Sans", sans-serif; text-anchor: middle; }
.svg-quote { fill: #f4a92c; font: 700 12px "Liberation Serif", serif; text-anchor: middle; }
.svg-tv { fill: #f2f2f2; font: 700 9px "Liberation Sans", sans-serif; text-anchor: start; }
.svg-zoom { fill: #fff; font: 400 6.500px "Liberation Sans", sans-serif; text-anchor: middle; }
.dock-sep { flex: none; width: 1px; height: 29px; margin: -2px 6.800px 0 6.800px; background: #5a565f; }
.dock-sep-2 { margin: -2px 6.800px 0 6.800px; }
.doc-q { color: #77757a; font: 300 31px/24px "Liberation Sans", sans-serif; }
.di-first-mini { margin-left: 8px; }
.mini {
  position: absolute;
  left: 50%;
  bottom: -1px;
  width: 9px;
  height: 9px;
  margin-left: -4.500px;
  border-radius: 2px;
  background: linear-gradient(#e4eefa 0 55%, #1aa2ee 55%);
  border: 1px solid #13a2f5;
}
.mini-svg { position: absolute; left: 50%; bottom: -3px; margin-left: -4px; }
.thumb {
  position: absolute;
  left: -4px;
  top: -6px;
  width: 32px;
  height: 28px;
  background: #1b1a20;
}
.thumb-light { background: linear-gradient(#2a2c33 0 2px, #bcd0ee 2px 6px, #1f2024 6px); height: 23px; top: -3px; }
.thumb-grid { background: #1a1a22 radial-gradient(circle, #33485a 1px, transparent 1.500px) 0 0 / 6px 6px; }
.thumb-photo { background: linear-gradient(90deg, #6a6a6c 0 9px, #241226 9px); height: 16px; top: 0; }
.trash { position: absolute; left: 1364px; top: 4px; }
```
